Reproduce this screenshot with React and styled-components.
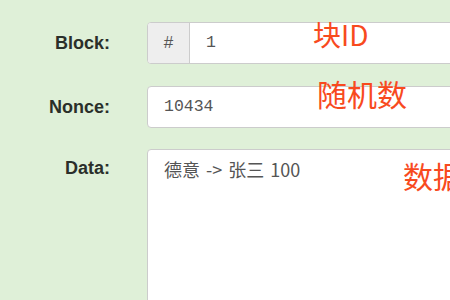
import React from 'react'
import styled, { createGlobalStyle } from 'styled-components'

const GlobalStyle = createGlobalStyle`
  html, body {
    margin: 0;
    background: #dff0d8;
    overflow: hidden;
  }
  body {
    font-family: "Liberation Sans", "Noto Sans CJK SC", sans-serif;
  }
`

const Form = styled.div`
  padding-top: 22px;
  display: flex;
  flex-direction: column;
  gap: 22px;
`

const Row = styled.div`
  position: relative;
  display: grid;
  grid-template-columns: 110px 420px;
  column-gap: 37px;
  align-items: ${p => (p.top ? 'start' : 'center')};
  margin-top: ${p => (p.top ? '-1px' : '0')};
`

const Label = styled.label`
  text-align: right;
  font-weight: bold;
  font-size: 18px;
  color: #2a2f2a;
  padding-top: ${p => (p.top ? '9px' : '0')};
`

const Group = styled.div`
  display: flex;
  height: ${p => p.h || 42}px;
  box-sizing: border-box;
  border: 1px solid #ccc;
  border-radius: 4px;
  background: #fff;
  overflow: hidden;
`

const Addon = styled.span`
  width: 41px;
  flex: none;
  display: flex;
  align-items: center;
  justify-content: center;
  background: #eee;
  border-right: 1px solid #ccc;
  font-size: 17px;
  color: #555;
`

const Field = styled.div`
  padding: 0 16px;
  line-height: 40px;
  font-family: "Liberation Mono", monospace;
  font-size: 16.5px;
  color: #555;
`

const TextBox = styled.div`
  padding: 6px 16px;
  font-family: "Noto Sans CJK SC", sans-serif;
  font-size: 18px;
  word-spacing: 2px;
  color: #555;
`

const Note = styled.span`
  position: absolute;
  left: ${p => p.x}px;
  top: ${p => p.y}px;
  font-family: "Noto Sans CJK SC", sans-serif;
  font-size: ${p => p.size || 28}px;
  line-height: 1;
  color: #f84a1e;
  white-space: nowrap;
`

export default function App() {
  return (
    <>
      <GlobalStyle />
      <Form>
        <Row>
          <Label>Block:</Label>
          <Group>
            <Addon>#</Addon>
            <Field>1</Field>
          </Group>
          <Note x={313} y={-2}>块ID</Note>
        </Row>
        <Row>
          <Label>Nonce:</Label>
          <Group>
            <Field>10434</Field>
          </Group>
          <Note x={317} y={-8} size={30}>随机数</Note>
        </Row>
        <Row top>
          <Label top>Data:</Label>
          <Group h={200}>
            <TextBox>德意 -&gt; 张三 100</TextBox>
          </Group>
          <Note x={403} y={11} size={30}>数据</Note>
        </Row>
      </Form>
    </>
  )
}
